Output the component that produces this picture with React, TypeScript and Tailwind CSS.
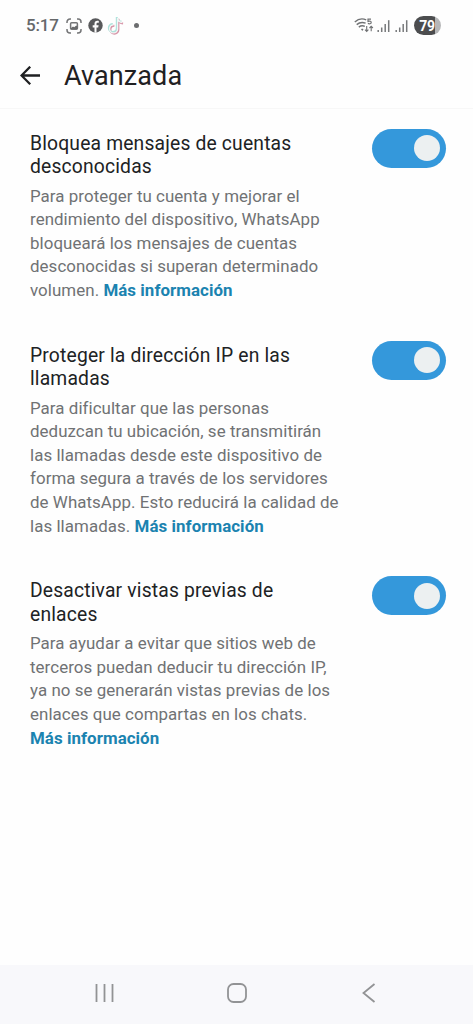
import React, { useState } from "react";

type Setting = { title: string[]; body: string[]; linkOnNewLine?: boolean };

const settings: Setting[] = [
  {
    title: ["Bloquea mensajes de cuentas", "desconocidas"],
    body: [
      "Para proteger tu cuenta y mejorar el",
      "rendimiento del dispositivo, WhatsApp",
      "bloqueará los mensajes de cuentas",
      "desconocidas si superan determinado",
      "volumen.",
    ],
  },
  {
    title: ["Proteger la dirección IP en las", "llamadas"],
    body: [
      "Para dificultar que las personas",
      "deduzcan tu ubicación, se transmitirán",
      "las llamadas desde este dispositivo de",
      "forma segura a través de los servidores",
      "de WhatsApp. Esto reducirá la calidad de",
      "las llamadas.",
    ],
  },
  {
    title: ["Desactivar vistas previas de", "enlaces"],
    body: [
      "Para ayudar a evitar que sitios web de",
      "terceros puedan deducir tu dirección IP,",
      "ya no se generarán vistas previas de los",
      "enlaces que compartas en los chats.",
    ],
    linkOnNewLine: true,
  },
];

function Toggle({ label }: { label: string }) {
  const [on, setOn] = useState(true);
  return (
    <button
      role="switch"
      aria-checked={on}
      aria-label={label}
      onClick={() => setOn(!on)}
      className={`flex h-[39px] w-[74px] shrink-0 items-center rounded-full px-[6px] ${on ? "justify-end bg-[#3498db]" : "justify-start bg-[#b8bcc0]"}`}
    >
      <span className="size-[26px] rounded-full bg-[#ecf0f1]" />
    </button>
  );
}

function SettingRow({ title, body, linkOnNewLine }: Setting) {
  const link = <a className="font-bold text-[#1b83b0]">Más información</a>;
  return (
    <section className="flex items-start justify-between pr-[27.5px] pl-[30px]">
      <div className="pt-[3px] whitespace-nowrap">
        <h2 className="text-[19.3px] leading-[23.5px] tracking-[0.17px] text-[#202224]">
          {title.map((line) => (
            <span key={line} className="block">{line}</span>
          ))}
        </h2>
        <p className="mt-[6px] text-[16.9px] leading-[23.6px] tracking-[0.06px] text-[#707274]">
          {body.map((line, i) => (
            <span key={line} className="block">
              {line}
              {!linkOnNewLine && i === body.length - 1 && <> {link}</>}
            </span>
          ))}
          {linkOnNewLine && <span className="block">{link}</span>}
        </p>
      </div>
      <Toggle label={title.join(" ")} />
    </section>
  );
}

function Signal() {
  return (
    <svg width="13" height="14" viewBox="0 0 13 14" stroke="#77797b" strokeWidth="1.5">
      <path d="M1.2 11v2M4.7 8.5V13M8.2 5V13" />
      <path d="M11.7 1.2V13" />
    </svg>
  );
}

const NOTE = "M9.7 1v11a4 4 0 1 1-4-4M9.7 1c.3 2.7 2 4.4 4.7 4.6";

function StatusBar() {
  return (
    <div className="flex h-[51px] items-center pl-[26px] text-[#66686a]">
      <span className="w-[40px] text-[17px] leading-none font-medium tracking-[-0.2px]">5:17</span>
      <svg width="16" height="16" viewBox="0 0 16 16" fill="none" stroke="#747577" strokeWidth="1.5">
        <path d="M1 5V4a3 3 0 0 1 3-3h1M11 1h1a3 3 0 0 1 3 3v1M15 11v1a3 3 0 0 1-3 3h-1M5 15H4a3 3 0 0 1-3-3v-1" />
        <rect x="4.6" y="4.8" width="6.8" height="6.4" rx="1" />
        <path d="M5 10l2-1.5 1.2.7 2-1.7 1.2 1V11H5z" fill="#68696b" stroke="none" />
      </svg>
      <svg className="ml-[6px]" width="15" height="15" viewBox="0 0 15 15">
        <circle cx="7.5" cy="7.5" r="7.2" fill="#58595b" />
        <path d="M6.5 14.8V9.4H4.7V7.2h1.8V5.7c0-2 1.1-3 2.8-3 .7 0 1.2.1 1.5.2v1.9H9.7c-.9 0-1.2.5-1.2 1.1v1.3h2.1l-.4 2.2H8.5v5.4z" fill="#fdfdfd" />
      </svg>
      <svg className="ml-[4px]" width="18" height="19" viewBox="0 0 18 19" fill="none" strokeWidth="2">
        <path d={NOTE} transform="translate(1.7 1.8)" stroke="#d795a8" />
        <path d={NOTE} transform="translate(.1 0)" stroke="#aee3dc" />
        <path d={NOTE} transform="translate(.9 .9)" stroke="#f4f5f5" strokeWidth="1.3" />
      </svg>
      <span className="ml-[9px] size-[5px] rounded-full bg-[#6c6d6f]" />
      <div className="ml-auto flex items-center pr-[32.5px]">
        <svg width="20" height="15" viewBox="0 0 20 15" fill="none" stroke="#707274" strokeWidth="1.4">
          <path d="M.8 4C4 1 8.5.3 12.2 1.8M2.7 6.6C5.2 4.5 8.5 4 11.6 5.1M4.8 9.1c1.8-1.4 4-1.6 6-.8" />
          <path d="M7 11.2c.8-.5 1.7-.5 2.5 0L8.3 13z" fill="#707274" stroke="none" />
          <path d="M17 1.2h-3v2.2c2.2-.6 3.3 0 3.2 1.1 0 1.4-2 1.6-3.3.9" strokeWidth="1.2" />
          <path d="M12.7 8v5.2M11 11.6l1.7 1.8 1.7-1.8M17.2 13.2V8.3M15.5 10l1.7-1.8L18.9 10" strokeWidth="1.1" />
        </svg>
        <span className="ml-[3px]"><Signal /></span>
        <span className="ml-[5px]"><Signal /></span>
        <div className="ml-[6px] flex h-[19px] w-[27px] items-center justify-center rounded-full bg-linear-to-r from-[#4c4d4f] from-79% to-[#b6b7b8] to-79% pt-[2px] text-[14px] leading-[17px] font-bold tracking-[-0.2px] text-white">79</div>
      </div>
    </div>
  );
}

export default function App() {
  return (
    <div className="flex h-[1024px] w-[473px] flex-col overflow-hidden bg-[#fefefe] font-['Roboto',sans-serif]">
      <StatusBar />
      <header className="flex h-[58px] items-center border-b border-[#f7f7f7] pb-[8px] pl-[20px] text-[#1f2022]">
        <svg width="21" height="20" viewBox="0 0 21 20" fill="none" stroke="currentColor" strokeWidth="2.3">
          <path d="M20 9.5H2M10.2.7L1.5 9.5l8.7 8.8" />
        </svg>
        <h1 className="ml-[23px] pt-[2px] text-[27px] leading-none tracking-[0.1px]">Avanzada</h1>
      </header>
      <main className="flex flex-1 flex-col gap-[38px] pt-[19.7px]">
        {settings.map((s) => <SettingRow key={s.title[0]} {...s} />)}
      </main>
      <nav className="flex h-[59px] items-center bg-[#f8f8fb] pb-[3px] pl-[94px] text-[#929395]">
        <svg width="21" height="20" viewBox="0 0 21 20" stroke="currentColor" strokeWidth="1.8">
          <path d="M2.5 1v18M10.5 1v18M18.5 1v18" />
        </svg>
        <svg className="ml-[112px]" width="20" height="20" viewBox="0 0 20 20" fill="none" stroke="currentColor" strokeWidth="1.8">
          <rect x="1" y="1" width="18" height="18" rx="5.5" />
        </svg>
        <svg className="ml-[115px]" width="14" height="20" viewBox="0 0 14 20" fill="none" stroke="currentColor" strokeWidth="1.8">
          <path d="M12.5 1L1.5 10l11 9" />
        </svg>
      </nav>
    </div>
  );
}
